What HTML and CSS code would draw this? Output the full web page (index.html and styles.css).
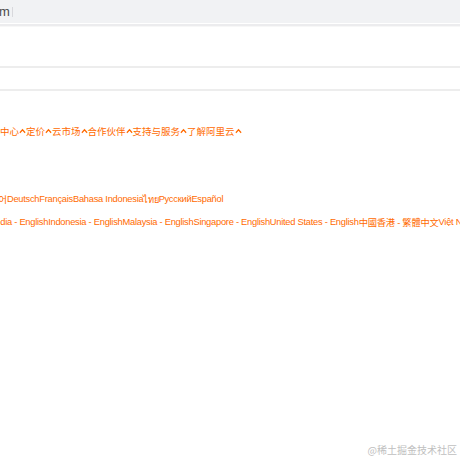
FILE: index.html
```html
<!DOCTYPE html>
<html lang="zh-CN">
<head>
<meta charset="utf-8">
<title>页面</title>
<link rel="stylesheet" href="styles.css">
</head>
<body>
<div class="page">
  <div class="addr-bar"><span class="addr-text">m</span><span class="caret"></span></div>
  <div class="addr-rule"></div>
  <div class="blank-row"></div>
  <div class="blank-row short"></div>
  <nav class="nav-row">
    <a class="nav-item">中心<svg class="chev" viewBox="0 0 8 6"><path d="M1 5 L4 1.6 L7 5" fill="none" stroke="currentColor" stroke-width="1.4"/></svg></a>
    <a class="nav-item">定价<svg class="chev" viewBox="0 0 8 6"><path d="M1 5 L4 1.6 L7 5" fill="none" stroke="currentColor" stroke-width="1.4"/></svg></a>
    <a class="nav-item">云市场<svg class="chev" viewBox="0 0 8 6"><path d="M1 5 L4 1.6 L7 5" fill="none" stroke="currentColor" stroke-width="1.4"/></svg></a>
    <a class="nav-item">合作伙伴<svg class="chev" viewBox="0 0 8 6"><path d="M1 5 L4 1.6 L7 5" fill="none" stroke="currentColor" stroke-width="1.4"/></svg></a>
    <a class="nav-item">支持与服务<svg class="chev" viewBox="0 0 8 6"><path d="M1 5 L4 1.6 L7 5" fill="none" stroke="currentColor" stroke-width="1.4"/></svg></a>
    <a class="nav-item">了解阿里云<svg class="chev" viewBox="0 0 8 6"><path d="M1 5 L4 1.6 L7 5" fill="none" stroke="currentColor" stroke-width="1.4"/></svg></a>
  </nav>
  <div class="lang-row"><a class="cut-ko">한국어</a><a>Deutsch</a><a>Français</a><a>Bahasa Indonesia</a><a>ไทย</a><a>Русский</a><a>Español</a></div>
  <div class="region-row"><a class="cut-in">India - English</a><a>Indonesia - English</a><a>Malaysia - English</a><a>Singapore - English</a><a>United States - English</a><a>中國香港 - 繁體中文</a><a>Việt Nam - Tiếng Việt</a></div>
  <div class="watermark">@稀土掘金技术社区</div>
</div>
</body>
</html>
```
FILE: styles.css
```css
html, body {
  margin: 0;
  padding: 0;
  background: #ffffff;
}
.page {
  position: relative;
  width: 460px;
  height: 460px;
  overflow: hidden;
  font-family: "Liberation Sans", "Noto Sans CJK SC", sans-serif;
}
.addr-bar {
  height: 23px;
  background: #f1f2f4;
  display: flex;
  align-items: center;
}
.addr-text {
  font-size: 13px;
  color: #4a4a4a;
  margin-left: -1px;
}
.caret {
  width: 1px;
  height: 10px;
  margin-left: 2px;
  background: #d8d8dc;
}
.addr-rule {
  height: 2px;
  margin-top: 1px;
  background: #ececee;
  border-bottom: 1px solid #f7f7f7;
}
.blank-row {
  height: 39px;
  border-bottom: 2px solid #ededed;
}
.blank-row.short {
  height: 21px;
}
.nav-row {
  display: flex;
  white-space: nowrap;
  margin-top: 32px;
  height: 16px;
  align-items: center;
  font-family: "Noto Sans CJK SC", sans-serif;
  font-size: 9.5px;
  color: #ff6a00;
}
.nav-item {
  display: flex;
  align-items: center;
}
.chev {
  width: 7px;
  height: 6px;
  margin: 0 0 0 0;
}
.lang-row, .region-row {
  display: flex;
  white-space: nowrap;
  font-size: 9.3px;
  letter-spacing: -0.25px;
  color: #ff6a00;
  height: 14px;
  align-items: center;
}
.lang-row {
  margin-top: 53px;
}
.region-row {
  margin-top: 9px;
}
.cut-ko {
  margin-left: -18px;
}
.cut-in {
  margin-left: -7px;
}
.watermark {
  position: absolute;
  right: 3px;
  bottom: 3px;
  font-family: "Noto Sans CJK SC", sans-serif;
  font-size: 10px;
  color: #c0c0c0;
}
```
